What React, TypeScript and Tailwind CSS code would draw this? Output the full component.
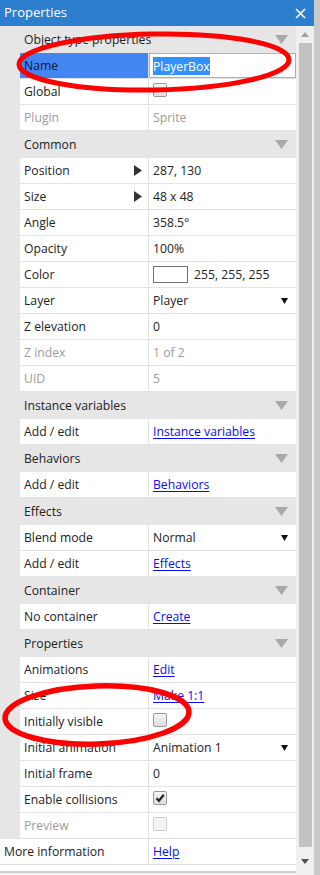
import React from "react";

type Row = {
    section?: boolean;
    label: string;
    value?: string;
    disabled?: boolean;
    link?: boolean;
    check?: "on" | "off" | "disabled";
    arrow?: boolean;
    dropdown?: boolean;
    color?: boolean;
    selected?: boolean;
};

const rows: Row[] = [
    { section: true, label: "Object type properties" },
    { label: "Name", value: "PlayerBox", selected: true },
    { label: "Global", check: "off" },
    { label: "Plugin", value: "Sprite", disabled: true },
    { section: true, label: "Common" },
    { label: "Position", value: "287, 130", arrow: true },
    { label: "Size", value: "48 x 48", arrow: true },
    { label: "Angle", value: "358.5°" },
    { label: "Opacity", value: "100%" },
    { label: "Color", value: "255, 255, 255", color: true },
    { label: "Layer", value: "Player", dropdown: true },
    { label: "Z elevation", value: "0" },
    { label: "Z index", value: "1 of 2", disabled: true },
    { label: "UID", value: "5", disabled: true },
    { section: true, label: "Instance variables" },
    { label: "Add / edit", value: "Instance variables", link: true },
    { section: true, label: "Behaviors" },
    { label: "Add / edit", value: "Behaviors", link: true },
    { section: true, label: "Effects" },
    { label: "Blend mode", value: "Normal", dropdown: true },
    { label: "Add / edit", value: "Effects", link: true },
    { section: true, label: "Container" },
    { label: "No container", value: "Create", link: true },
    { section: true, label: "Properties" },
    { label: "Animations", value: "Edit", link: true },
    { label: "Size", value: "Make 1:1", link: true },
    { label: "Initially visible", check: "off" },
    { label: "Initial animation", value: "Animation 1", dropdown: true },
    { label: "Initial frame", value: "0" },
    { label: "Enable collisions", check: "on" },
    { label: "Preview", check: "disabled", disabled: true },
];

function Checkbox({ state }: { state: "on" | "off" | "disabled" }) {
    return (
        <div
            className={
                "w-[14px] h-[14px] mb-[4px] rounded-[2px] border flex items-center justify-center " +
                (state === "disabled"
                    ? "border-[#cfcfcf] bg-[#f4f4f4]"
                    : "border-[#9a9a9a] bg-gradient-to-b from-[#f4f4f4] to-[#dedede]")
            }
        >
            {state === "on" && (
                <svg width="10" height="10" viewBox="0 0 10 10">
                    <path d="M1.5 5.2 L4 7.8 L8.8 1.8" stroke="#222" strokeWidth="2.2" fill="none" />
                </svg>
            )}
        </div>
    );
}

function SectionRow({ label }: { label: string }) {
    return (
        <div className="flex h-[27px] items-center justify-between bg-[#e6e6e6] pl-[24px] pr-[8px] text-[#222]">
            <span className="pt-[2px]">{label}</span>
            <svg width="13" height="9" viewBox="0 0 13 9">
                <polygon points="0,0 13,0 6.5,9" fill="#a9a9a9" />
            </svg>
        </div>
    );
}

function PropRow({ row }: { row: Row }) {
    const text = row.disabled ? "text-[#9b9b9b]" : "text-[#222]";
    return (
        <div className="flex h-[26px] bg-[#e6e6e6]">
            <div className="w-[20px]" />
            <div className="flex flex-1 bg-white border-b border-[#e2e2e2]">
                <div
                    className={
                        "w-[129px] border-r border-[#e2e2e2] pl-[4px] pr-[6px] flex items-center justify-between " +
                        (row.selected ? "bg-[#4385f2] text-[#101a3a]" : text)
                    }
                >
                    <span className="pt-[2px]">{row.label}</span>
                    {row.arrow && (
                        <svg width="8" height="11" viewBox="0 0 8 11">
                            <polygon points="0,0 8,5.5 0,11" fill="#333" />
                        </svg>
                    )}
                </div>
                {row.selected ? (
                    <div className="flex-1 flex items-center border border-[#8cb6ee] pl-[3px]">
                        <span className="bg-[#3391ff] text-white leading-[17px] pt-[1px]">{row.value}</span>
                    </div>
                ) : (
                    <div className={"flex-1 flex items-center justify-between pl-[4px] pr-[8px] " + text}>
                        <div className="flex items-center gap-[6px]">
                            {row.color && <div className="w-[35px] h-[17px] border border-[#707070] bg-white" />}
                            {row.check && <Checkbox state={row.check} />}
                            {row.value && (
                                <span className={"pt-[2px] " + (row.link ? "text-[#0a0aff] underline underline-offset-2" : "")}>
                                    {row.value}
                                </span>
                            )}
                        </div>
                        {row.dropdown && (
                            <svg width="7" height="6" viewBox="0 0 7 6">
                                <polygon points="0,0 7,0 3.5,6" fill="#111" />
                            </svg>
                        )}
                    </div>
                )}
            </div>
        </div>
    );
}

export default function App() {
    return (
        <div className="relative w-[320px] h-[875px] flex bg-[#c9c9c9] overflow-hidden text-[12.2px] font-['Open_Sans',sans-serif]">
            <div className="w-[314px] flex flex-col">
                <div className="h-[26px] bg-[#2c7fcf] flex items-center justify-between pl-[4px] pr-[8px] text-white text-[13px]">
                    <span>Properties</span>
                    <svg width="11" height="11" viewBox="0 0 11 11">
                        <path d="M1 1 L10 10 M10 1 L1 10" stroke="white" strokeWidth="1.6" />
                    </svg>
                </div>
                <div className="flex flex-1 bg-[#f4f4f4]">
                    <div className="w-[296px] h-[847px] overflow-hidden bg-white border-b-2 border-[#cfcfcf]">
                        {rows.map((r, i) =>
                            r.section ? <SectionRow key={i} label={r.label} /> : <PropRow key={i} row={r} />
                        )}
                        <div className="flex h-[26px] bg-white border-b border-[#e2e2e2] text-[#222]">
                            <div className="w-[149px] border-r border-[#e2e2e2] pl-[4px] flex items-center">
                                <span className="pt-[2px]">More information</span>
                            </div>
                            <div className="flex-1 pl-[4px] flex items-center">
                                <span className="pt-[2px] text-[#0a0aff] underline underline-offset-2">Help</span>
                            </div>
                        </div>
                    </div>
                    <div className="w-[18px] flex flex-col items-center bg-[#f0f0f0]">
                        <div className="h-[17px] flex items-center justify-center">
                            <svg width="8" height="5" viewBox="0 0 8 5">
                                <polygon points="0,5 8,5 4,0" fill="#a3a3a3" />
                            </svg>
                        </div>
                        <div className="w-[13px] h-[804px] bg-[#c1c1c1]" />
                        <div className="flex-1 flex items-center justify-center">
                            <svg width="8" height="5" viewBox="0 0 8 5">
                                <polygon points="0,0 8,0 4,5" fill="#505050" />
                            </svg>
                        </div>
                    </div>
                </div>
            </div>
            <svg className="absolute left-0 top-0 pointer-events-none" width="320" height="875">
                <ellipse cx="154" cy="62" rx="135" ry="28" transform="rotate(-1 154 62)" fill="none" stroke="#ff0000" strokeWidth="5" />
                <ellipse cx="97" cy="715" rx="92" ry="29" transform="rotate(-2 97 715)" fill="none" stroke="#ff0000" strokeWidth="5.5" />
            </svg>
        </div>
    );
}
